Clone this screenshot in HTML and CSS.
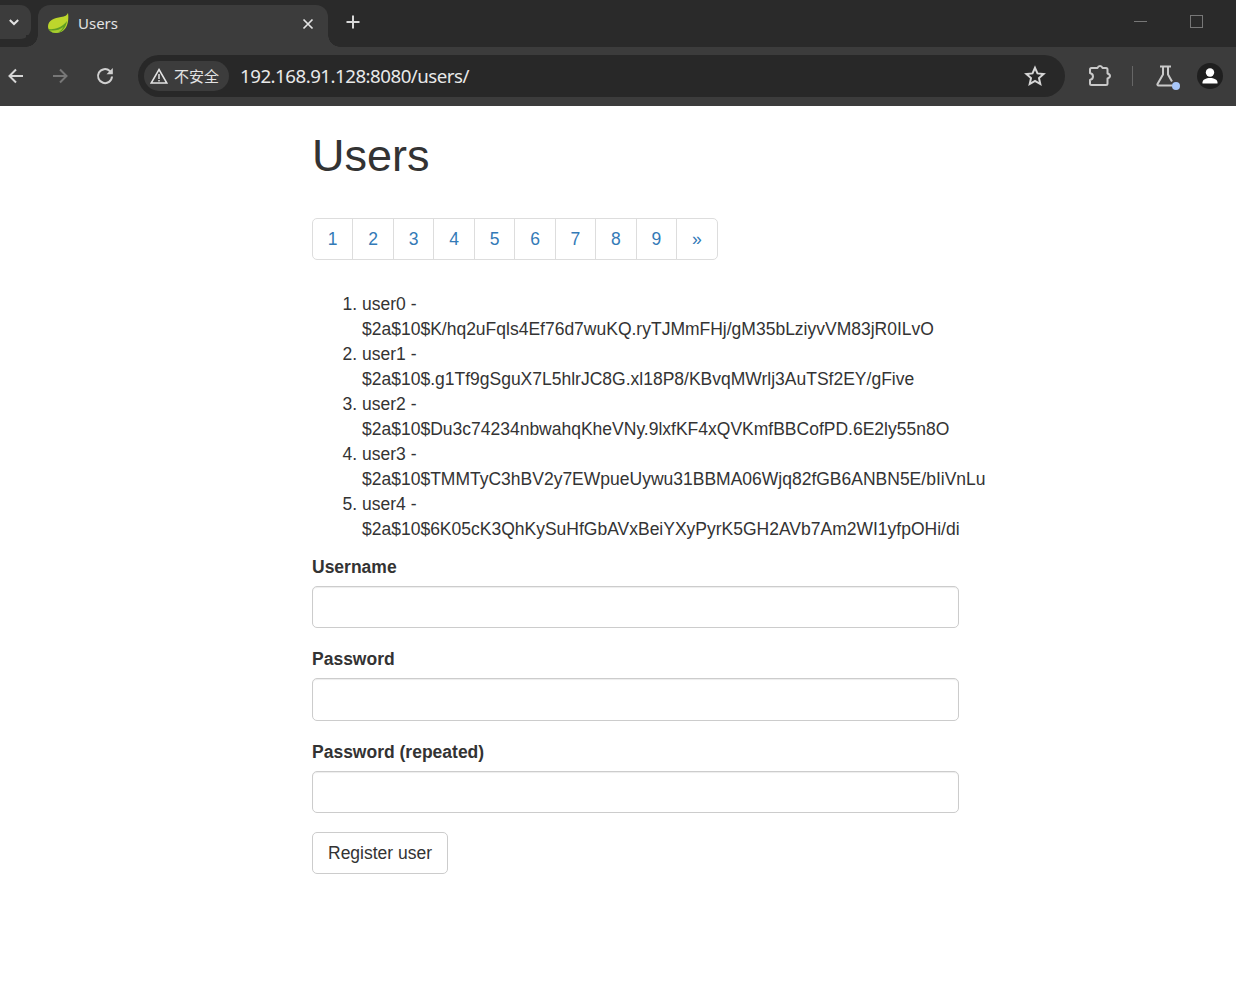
FILE: index.html
```html
<!DOCTYPE html>
<html lang="en">
<head>
<meta charset="utf-8">
<title>Users</title>
<link rel="stylesheet" href="styles.css">
</head>
<body>
<header class="chrome">
  <div class="tabstrip">
    <div class="tabsearch">
      <svg width="14" height="14" viewBox="0 0 14 14"><path d="M2.8 5 7 9l4.2-4" fill="none" stroke="#e3e3e3" stroke-width="2"/></svg>
    </div>
    <div class="tab">
      <svg class="leaf" width="22" height="22" viewBox="0 0 22 22"><path d="M21 1C20 3.500 18 4.600 14 5 7.500 5.800 1 8.500 1 14.500 1 18 4 21 9 21 15 21 19.500 17 20.800 10.500 21.500 7 21.500 4 21 1Z" fill="#bcd62c"/><path d="M1.500 17C6 17.500 14 17 20 9 18.800 16.500 14.500 21 9 21 5.500 21 3 19.500 1.500 17Z" fill="#5f9e24"/><path d="M3 18.200C7 19 12 18.300 16.500 15 14 19 11.500 21 9 21 6.500 21 4.500 20 3 18.200Z" fill="#a8cc2e"/></svg>
      <span class="tab-title">Users</span>
      <svg class="tab-close" width="12" height="12" viewBox="0 0 12 12"><path d="M1.500 1.500l9 9M10.500 1.500l-9 9" stroke="#e3e3e3" stroke-width="1.700"/></svg>
    </div>
    <svg class="newtab" width="16" height="16" viewBox="0 0 16 16"><path d="M8 1.500v13M1.500 8h13" stroke="#d8d8d8" stroke-width="2"/></svg>
    <div class="window-controls">
      <span class="win-min"></span>
      <span class="win-max"></span>
    </div>
  </div>
  <div class="toolbar">
    <svg class="nav-back" width="18" height="18" viewBox="0 0 18 18"><path d="M16 9H2.500M9 2.500 2.500 9 9 15.500" fill="none" stroke="#d6d6d6" stroke-width="2"/></svg>
    <svg class="nav-forward" width="18" height="18" viewBox="0 0 18 18"><path d="M2 9h13.500M9 2.500 15.500 9 9 15.500" fill="none" stroke="#777" stroke-width="2"/></svg>
    <svg class="nav-reload" width="18" height="18" viewBox="0 0 18 18"><path d="M16 9.500A7 7 0 1 1 13.800 4L15.800 6" fill="none" stroke="#d0d0d0" stroke-width="2"/><path d="M16.800 1V7.300H10.500Z" fill="#d0d0d0"/></svg>
    <div class="omnibox">
      <div class="security">
        <svg width="18" height="16" viewBox="0 0 18 16"><path d="M9 1.500 16.800 15H1.200Z" fill="none" stroke="#e3e3e3" stroke-width="1.500"/><path d="M9 6v5M9 12v1.500" stroke="#e3e3e3" stroke-width="1.500"/></svg>
        <span class="security-text">不安全</span>
      </div>
      <span class="url">192.168.91.128:8080/users/</span>
      <svg class="star" width="22" height="22" viewBox="0 0 22 22"><path d="M11 2.800l2.500 5.600 6.100.6-4.600 4.100 1.300 6L11 16l-5.300 3.100 1.300-6L2.400 9l6.100-.6Z" fill="none" stroke="#d6d6d6" stroke-width="2"/></svg>
    </div>
    <svg class="extensions" width="24" height="24" viewBox="0 0 24 24"><path d="M3.500 4H9.500C10 2.500 11 2 12 2S14 2.500 14.500 4H18A1.500 1.500 0 0 1 19.500 5.500V9.500C21 10 22 11 22 12S21 14 19.500 14.500V19.500A1.500 1.500 0 0 1 18 21H3.500A1.500 1.500 0 0 1 2 19.500V16C4 15.500 5 14 5 12.500S4 9.500 2 9V5.500A1.500 1.500 0 0 1 3.500 4Z" fill="none" stroke="#c9c9c9" stroke-width="2" stroke-linejoin="round"/></svg>
    <span class="divider"></span>
    <div class="labs">
      <svg width="22" height="24" viewBox="0 0 22 24"><path d="M5 2.500h11M8 3v7.500L2.500 20a1 1 0 0 0 1 1.500h14M13 3v7.500l4 7" fill="none" stroke="#c9c9c9" stroke-width="2"/></svg>
      <span class="labs-dot"></span>
    </div>
    <div class="avatar">
      <svg width="26" height="26" viewBox="0 0 26 26"><circle cx="13" cy="13" r="13" fill="#1f1f1f"/><circle cx="13" cy="9.500" r="4.200" fill="#fff"/><path d="M5.500 19.500c0-3 3.500-4.500 7.500-4.500s7.500 1.500 7.500 4.500v1h-15Z" fill="#fff"/></svg>
    </div>
  </div>
</header>
<main class="page">
  <h1 class="title">Users</h1>
  <nav class="pagination">
    <a class="page-link" href="#">1</a>
    <a class="page-link" href="#">2</a>
    <a class="page-link" href="#">3</a>
    <a class="page-link" href="#">4</a>
    <a class="page-link" href="#">5</a>
    <a class="page-link" href="#">6</a>
    <a class="page-link" href="#">7</a>
    <a class="page-link" href="#">8</a>
    <a class="page-link" href="#">9</a>
    <a class="page-link" href="#">»</a>
  </nav>
  <ol class="users">
    <li>user0 - $2a$10$K/hq2uFqls4Ef76d7wuKQ.ryTJMmFHj/gM35bLziyvVM83jR0ILvO</li>
    <li>user1 - $2a$10$.g1Tf9gSguX7L5hlrJC8G.xl18P8/KBvqMWrlj3AuTSf2EY/gFive</li>
    <li>user2 - $2a$10$Du3c74234nbwahqKheVNy.9lxfKF4xQVKmfBBCofPD.6E2ly55n8O</li>
    <li>user3 - $2a$10$TMMTyC3hBV2y7EWpueUywu31BBMA06Wjq82fGB6ANBN5E/bIiVnLu</li>
    <li>user4 - $2a$10$6K05cK3QhKySuHfGbAVxBeiYXyPyrK5GH2AVb7Am2WI1yfpOHi/di</li>
  </ol>
  <form class="register">
    <div class="form-group">
      <label class="field-label" for="username">Username</label>
      <input class="field" id="username" type="text">
    </div>
    <div class="form-group">
      <label class="field-label" for="password">Password</label>
      <input class="field" id="password" type="password">
    </div>
    <div class="form-group">
      <label class="field-label" for="repeated">Password (repeated)</label>
      <input class="field" id="repeated" type="password">
    </div>
    <button class="btn" type="button">Register user</button>
  </form>
</main>
</body>
</html>
```
FILE: styles.css
```css
* { box-sizing: border-box; }
html, body { margin: 0; padding: 0; background: #fff; }
body {
  font-family: "Liberation Sans", Arial, sans-serif;
  font-size: 17.5px;
  line-height: 25px;
  color: #333;
  overflow: hidden;
}

/* Browser chrome */
.chrome { height: 106px; background: #3c3c3c; display: flex; flex-direction: column; }
.tabstrip {
  height: 47px;
  background: #2a2a2a;
  display: flex;
  align-items: flex-start;
}
.tabsearch {
  width: 31px;
  height: 34px;
  margin-top: 5px;
  margin-right: 7px;
  padding-left: 7px;
  background: #3c3c3c;
  border-radius: 0 11px 11px 0;
  display: flex;
  align-items: center;
}
.tab {
  position: relative;
  width: 290px;
  height: 42px;
  margin-top: 5px;
  background: #3c3c3c;
  border-radius: 12px 12px 0 0;
  display: flex;
  align-items: center;
  padding-left: 9px;
  color: #e3e3e3;
  font-family: "Noto Sans", "Open Sans", sans-serif;
  font-size: 15px;
}
.tab::before, .tab::after {
  content: "";
  position: absolute;
  bottom: 0;
  width: 12px;
  height: 12px;
}
.tab::before { left: -12px; background: radial-gradient(circle at 0 0, #2a2a2a 11.5px, #3c3c3c 12px); }
.tab::after { right: -12px; background: radial-gradient(circle at 100% 0, #2a2a2a 11.5px, #3c3c3c 12px); }
.tab-title { margin-left: 9px; flex: 1; line-height: 36px; height: 42px; }
.tab-close { margin-right: 14px; margin-bottom: 4px; }
.leaf { margin-bottom: 6px; }
.newtab { margin: 14px 0 0 17px; }
.window-controls { margin-left: auto; display: flex; align-items: center; height: 42px; }
.win-min { width: 13px; height: 1px; background: #777; margin-right: 43px; }
.win-max { width: 13px; height: 13px; border: 1px solid #777; margin-right: 33px; }

.toolbar { height: 59px; display: flex; align-items: center; padding-bottom: 1px; }
.nav-back { margin-left: 7px; }
.nav-forward { margin-left: 26px; }
.nav-reload { margin-left: 27px; }
.omnibox {
  margin-left: 24px;
  width: 927px;
  height: 42px;
  background: #282828;
  border-radius: 21px;
  display: flex;
  align-items: center;
  padding-left: 6px;
}
.security {
  height: 30px;
  width: 85px;
  background: #3c3c3c;
  border-radius: 15px;
  display: flex;
  align-items: center;
  padding-left: 6px;
  gap: 6px;
}
.security-text {
  margin-bottom: 2px;
  font-family: "Noto Sans CJK SC", sans-serif;
  font-size: 15px;
  color: #e3e3e3;
}
.url {
  margin: 0 0 2px 11px;
  font-family: "Noto Sans", "Open Sans", sans-serif;
  font-size: 18.700px;
  letter-spacing: -0.500px;
  color: #e8e8e8;
  flex: 1;
}
.star { margin-right: 19px; }
.extensions { margin-left: 23px; }
.divider { width: 1px; height: 20px; background: #666; margin-left: 20px; }
.labs { position: relative; width: 22px; height: 24px; margin-left: 22px; }
.labs-dot {
  position: absolute;
  right: -3px;
  bottom: -2px;
  width: 8px;
  height: 8px;
  border-radius: 50%;
  background: #a8c7fa;
}
.avatar { margin-left: 20px; height: 26px; }

/* Page */
.page { width: 647px; margin-left: 312px; }
.title {
  margin: 25px 0 37.500px;
  font-size: 45px;
  font-weight: 500;
  line-height: 49.500px;
  color: #333;
}
.pagination {
  display: flex;
  width: max-content;
  margin: 0 0 32px;
  border-radius: 5px;
}
.page-link {
  display: block;
  height: 42px;
  padding: 7.500px 14.870px;
  margin-left: -1px;
  background: #fff;
  border: 1px solid #ddd;
  color: #337ab7;
  text-decoration: none;
  font-size: 17.500px;
  line-height: 25px;
}
.page-link:first-child { margin-left: 0; border-radius: 5px 0 0 5px; }
.page-link:last-child { border-radius: 0 5px 5px 0; }
.users { margin: 0 0 12.500px; padding-left: 50px; }
.form-group { margin-bottom: 18.750px; }
.field-label {
  display: block;
  margin-bottom: 6.250px;
  font-weight: 700;
  line-height: 25px;
}
.field {
  display: block;
  width: 100%;
  height: 42.500px;
  padding: 7.500px 15px;
  background: #fff;
  border: 1px solid #ccc;
  border-radius: 5px;
  box-shadow: inset 0 1px 1px rgba(0,0,0,.075);
  font: inherit;
  color: #555;
}
.btn {
  display: block;
  height: 42px;
  padding: 0 15px;
  background: #fff;
  border: 1px solid #ccc;
  border-radius: 5px;
  font: inherit;
  color: #333;
}
```
